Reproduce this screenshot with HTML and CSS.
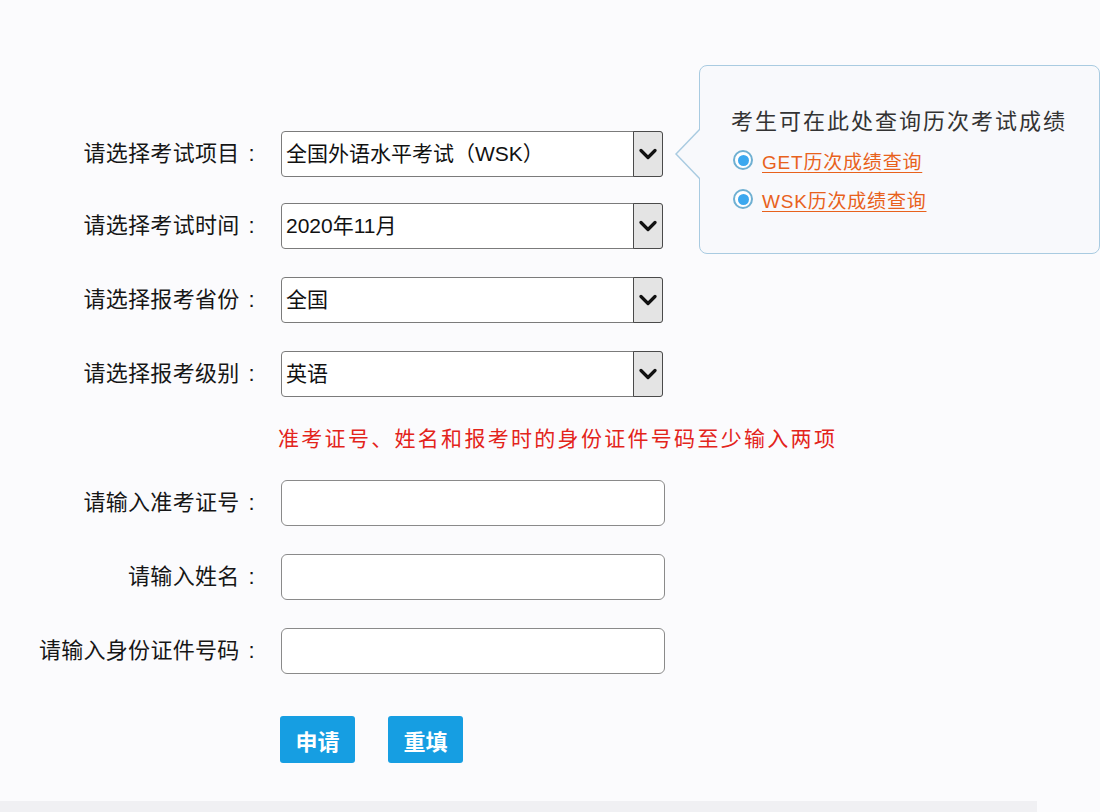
FILE: index.html
```html
<!DOCTYPE html>
<html lang="zh-CN">
<head>
<meta charset="utf-8">
<title>成绩查询</title>
<link rel="stylesheet" href="styles.css">
</head>
<body>
<div class="page">
  <form class="form">
    <div class="row">
      <label class="label">请选择考试项目<span class="colon">:</span></label>
      <div class="select"><span class="select-text">全国外语水平考试（WSK）</span><span class="arrow"><svg width="18" height="12" viewBox="0 0 18 12"><path d="M2 2.5 L9 9.5 L16 2.5" fill="none" stroke="#111" stroke-width="3.2" stroke-linecap="round" stroke-linejoin="round"/></svg></span></div>
    </div>
    <div class="row row-tight">
      <label class="label">请选择考试时间<span class="colon">:</span></label>
      <div class="select"><span class="select-text">2020年11月</span><span class="arrow"><svg width="18" height="12" viewBox="0 0 18 12"><path d="M2 2.5 L9 9.5 L16 2.5" fill="none" stroke="#111" stroke-width="3.2" stroke-linecap="round" stroke-linejoin="round"/></svg></span></div>
    </div>
    <div class="row">
      <label class="label">请选择报考省份<span class="colon">:</span></label>
      <div class="select"><span class="select-text">全国</span><span class="arrow"><svg width="18" height="12" viewBox="0 0 18 12"><path d="M2 2.5 L9 9.5 L16 2.5" fill="none" stroke="#111" stroke-width="3.2" stroke-linecap="round" stroke-linejoin="round"/></svg></span></div>
    </div>
    <div class="row">
      <label class="label">请选择报考级别<span class="colon">:</span></label>
      <div class="select"><span class="select-text">英语</span><span class="arrow"><svg width="18" height="12" viewBox="0 0 18 12"><path d="M2 2.5 L9 9.5 L16 2.5" fill="none" stroke="#111" stroke-width="3.2" stroke-linecap="round" stroke-linejoin="round"/></svg></span></div>
    </div>
    <div class="row row-note">
      <span class="label"></span>
      <p class="note">准考证号、姓名和报考时的身份证件号码至少输入两项</p>
    </div>
    <div class="row">
      <label class="label">请输入准考证号<span class="colon">:</span></label>
      <input class="input" type="text">
    </div>
    <div class="row">
      <label class="label">请输入姓名<span class="colon">:</span></label>
      <input class="input" type="text">
    </div>
    <div class="row">
      <label class="label">请输入身份证件号码<span class="colon">:</span></label>
      <input class="input" type="text">
    </div>
    <div class="row row-buttons">
      <span class="label"></span>
      <div class="buttons">
        <button type="button" class="btn">申请</button>
        <button type="button" class="btn">重填</button>
      </div>
    </div>
  </form>
  <div class="footer-strip"></div>

  <div class="tip">
    <p class="tip-title">考生可在此处查询历次考试成绩</p>
    <ul class="tip-links">
      <li><span class="radio"></span><a href="#">GET历次成绩查询</a></li>
      <li><span class="radio"></span><a href="#">WSK历次成绩查询</a></li>
    </ul>
  </div>
</div>
</body>
</html>
```

FILE: styles.css
```css
* { box-sizing: border-box; }

html, body {
  margin: 0;
  padding: 0;
  background: #fbfbfd;
  font-family: "Liberation Sans", "Noto Sans CJK SC", sans-serif;
  color: #161616;
}

.page {
  position: relative;
  width: 1100px;
  height: 812px;
  overflow: hidden;
  padding-top: 131px;
}

.form {
  display: flex;
  flex-direction: column;
  gap: 28px;
}

.row {
  display: grid;
  grid-template-columns: 259px 384px;
  column-gap: 22px;
  align-items: center;
}

.row-tight { margin-top: -2px; }

.label {
  text-align: right;
  font-size: 22px;
  line-height: 46px;
  letter-spacing: 0.3px;
  white-space: nowrap;
  color: #161616;
}

.colon {
  margin-left: 9px;
  margin-right: 4px;
}

.row-note .label { line-height: 27px; }

.select {
  width: 382px;
  height: 46px;
  border: 1px solid #7b7b7b;
  border-radius: 4px;
  background: #fff;
  display: flex;
  align-items: stretch;
}

.select-text {
  flex: 1;
  font-size: 21px;
  line-height: 44px;
  padding-left: 4px;
  white-space: nowrap;
  color: #111;
}

.arrow {
  width: 30px;
  margin: -1px -1px -1px 0;
  background: #e4e4e4;
  border: 1px solid #4a4a4a;
  border-radius: 0 3px 3px 0;
  display: flex;
  align-items: center;
  justify-content: center;
}

.note {
  margin: 0;
  height: 27px;
  line-height: 27px;
  font-size: 21px;
  letter-spacing: 2.3px;
  color: #e3241b;
  white-space: nowrap;
  margin-left: -3px;
}

.input {
  width: 384px;
  height: 46px;
  border: 1px solid #8a8a8a;
  border-radius: 6px;
  background: #fff;
  font-size: 20px;
  padding: 0 8px;
  font-family: inherit;
}

.row-buttons { margin-top: 14px; }

.buttons {
  display: flex;
  gap: 33px;
  margin-left: -1px;
}

.btn {
  width: 75px;
  height: 47px;
  border: none;
  border-radius: 3px;
  background: #169ee2;
  color: #fff;
  font-family: "Noto Sans CJK SC", sans-serif;
  font-size: 22px;
  font-weight: bold;
  padding: 0;
  cursor: pointer;
}

.footer-strip {
  margin-top: 38px;
  width: 1037px;
  height: 12px;
  background: #f0f0f3;
}

/* popover */
.tip {
  position: absolute;
  left: 699px;
  top: 65px;
  width: 401px;
  height: 189px;
  background: #f8f9fc;
  border: 1px solid #a9cbe1;
  border-radius: 8px;
  padding: 36px 0 0 31px;
}

.tip::before,
.tip::after {
  content: "";
  position: absolute;
  top: 62px;
  width: 0;
  height: 0;
  border-style: solid;
}

.tip::before {
  left: -25px;
  border-width: 26px 25px 26px 0;
  border-color: transparent #a9cbe1 transparent transparent;
}

.tip::after {
  left: -23px;
  top: 63px;
  border-width: 25px 24px 25px 0;
  border-color: transparent #f8f9fc transparent transparent;
}

.tip-title {
  margin: 0;
  font-family: "Noto Sans CJK SC", sans-serif;
  font-size: 22px;
  letter-spacing: 2px;
  line-height: 34px;
  color: #333;
  white-space: nowrap;
}

.tip-links {
  list-style: none;
  margin: 10px 0 0 0;
  padding: 0;
  display: flex;
  flex-direction: column;
  gap: 11px;
}

.tip-links li {
  display: flex;
  align-items: center;
  height: 28px;
  gap: 9px;
}

.radio {
  width: 20px;
  height: 20px;
  border-radius: 50%;
  border: 2px solid #6fb0d2;
  background: #fff;
  display: flex;
  align-items: center;
  justify-content: center;
  margin-left: 2px;
}

.radio::after {
  content: "";
  width: 11px;
  height: 11px;
  border-radius: 50%;
  background: #3ba8ef;
}

.tip-links a {
  font-size: 19px;
  letter-spacing: 0.8px;
  color: #e8621c;
  text-decoration: underline;
  text-underline-offset: 3px;
  white-space: nowrap;
}
```
